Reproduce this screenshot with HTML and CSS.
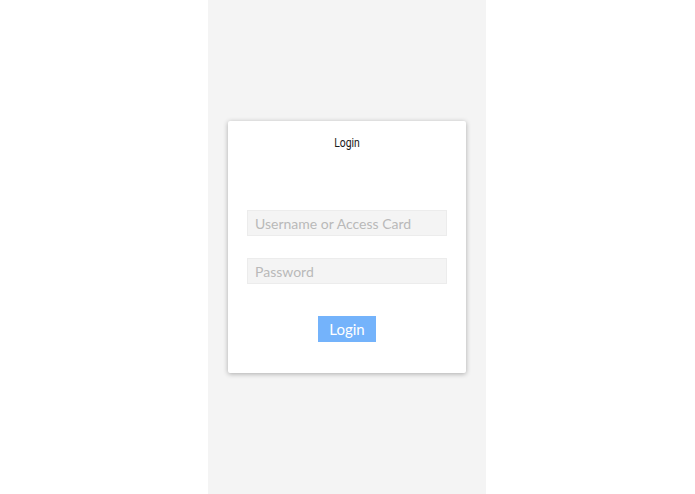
FILE: index.html
```html
<!DOCTYPE html>
<html lang="en">
<head>
    <meta charset="UTF-8">
    <meta name="viewport" content="width=device-width, initial-scale=1.0">
    <title>Login</title>
    <link rel="stylesheet" href="styles.css">
</head>
<body>
    <div class="page">
        <div class="login-card">
            <div class="login-title"><span>Login</span></div>
            <form class="login-form">
                <input class="login-input" type="text" placeholder="Username or Access Card">
                <input class="login-input" type="password" placeholder="Password">
                <button class="login-btn" type="button">Login</button>
            </form>
        </div>
    </div>
</body>
</html>
```

FILE: styles.css
```css
* {
    margin: 0;
    padding: 0;
    box-sizing: border-box;
}
html, body {
    height: 100%;
    background-color: #fff;
}
.page {
    width: 278px;
    height: 100%;
    margin-left: 208px;
    background-color: #f4f4f4;
    padding: 121px 20px 0 20px;
}
.login-card {
    width: 238px;
    height: 252px;
    background-color: #fff;
    box-shadow: 0 1px 5px rgba(0, 0, 0, 0.3);
    border-radius: 2px;
    padding-top: 14px;
}
.login-title {
    text-align: center;
    font-family: "Roboto", "DejaVu Sans", sans-serif;
    font-size: 13px;
    line-height: 16px;
    color: #1a1a1a;
}
/* condensed look of the title */
.login-title span {
    display: inline-block;
    transform: scaleX(0.8);
}
.login-form {
    display: flex;
    flex-direction: column;
    align-items: center;
    padding-top: 59px;
}
.login-input {
    width: 200px;
    height: 26px;
    border: 1px solid #ececec;
    background-color: #f4f4f4;
    padding: 0 7px;
    font-family: "Lato", "Liberation Sans", sans-serif;
    font-size: 14px;
    color: #333;
    outline: none;
    margin-bottom: 22px;
}
.login-input::placeholder {
    color: #b9b9b9;
}
.login-btn {
    margin-top: 10px;
    width: 58px;
    height: 26px;
    border: none;
    background-color: #74b3fb;
    color: #fff;
    font-family: "Lato", "Noto Sans", sans-serif;
    font-size: 15px;
}
```
